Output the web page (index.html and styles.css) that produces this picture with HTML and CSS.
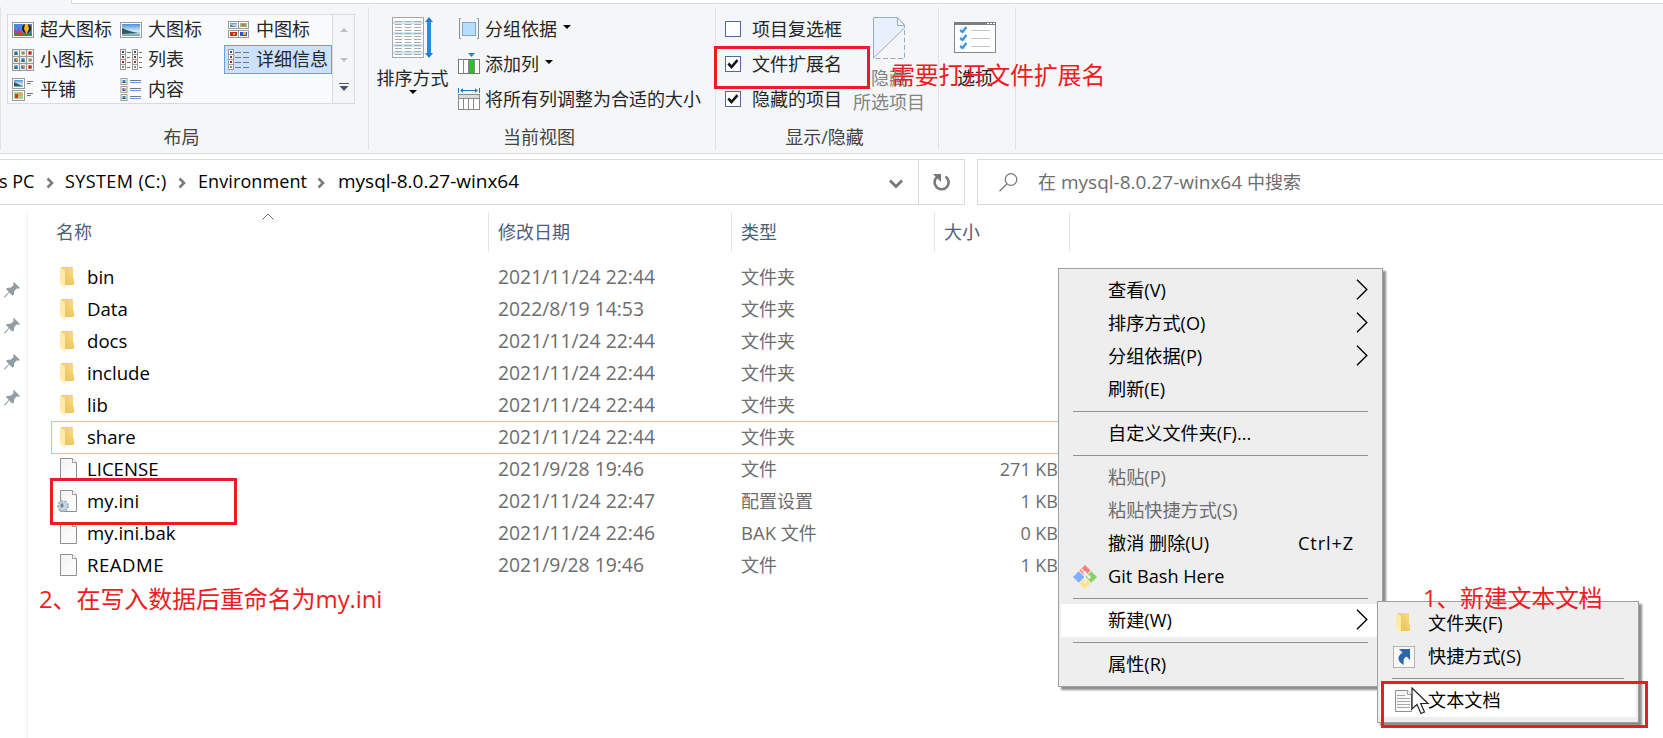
FILE: index.html
```html
<!DOCTYPE html>
<html lang="zh-CN">
<head>
<meta charset="utf-8">
<title>mysql-8.0.27-winx64</title>
<link rel="stylesheet" href="styles.css">
</head>
<body>
<svg class="defs" width="0" height="0">
  <defs>
    <linearGradient id="goldFront" x1="0" x2="0" y1="0" y2="1"><stop offset="0" stop-color="#ffe79c"/><stop offset="1" stop-color="#fff0b8"/></linearGradient>
    <linearGradient id="goldBack" x1="0" x2="1" y1="1" y2="0"><stop offset="0" stop-color="#e6bd55"/><stop offset="1" stop-color="#fbdc80"/></linearGradient>
    <linearGradient id="sky" x1="0" x2="0" y1="0" y2="1"><stop offset="0" stop-color="#4b8fdb"/><stop offset=".6" stop-color="#d6ecfa"/><stop offset="1" stop-color="#6a9dbd"/></linearGradient>
    <linearGradient id="paper" x1="0" x2="1" y1="0" y2="1"><stop offset="0" stop-color="#f1f2f3"/><stop offset="1" stop-color="#fff"/></linearGradient>
  </defs>
  <symbol id="folder" viewBox="0 0 15 21">
    <path d="M1 0H13V11L14 12V18H4V4Z" fill="url(#goldBack)"/>
    <path d="M0 .5 5 3V21L0 17Z" fill="url(#goldFront)"/>
  </symbol>
  <symbol id="file" viewBox="0 0 17 22">
    <path d="M.5.5H12.5L16.5 4.5V21.5H.5Z" fill="url(#paper)" stroke="#8d8f91"/>
    <path d="M12.5.5V4.5H16.5" fill="#fff" stroke="#9b9d9f"/>
  </symbol>
  <symbol id="pin" viewBox="0 0 16 16">
    <path d="M10 0 16 6 14.500 6.800 12.500 6.600 10 9.500 10 12.500 8.600 13.800 5.400 10.600 1 15.500 0 15 .4 14.300 4.900 10 2 7 3.500 5.800 6.500 5.800 9.500 3.200 9.200 1Z" fill="#929da3"/>
  </symbol>
  <symbol id="crumb" viewBox="0 0 8 12"><path d="M1.5 1.5 6 6 1.5 10.5" fill="none" stroke="#7b7b7b" stroke-width="2.6"/></symbol>
  <symbol id="drop" viewBox="0 0 8 4"><path d="M0 0H8L4 4Z" fill="#000"/></symbol>
  <symbol id="more" viewBox="0 0 12 21"><path d="M1 .8 10.8 10.5 1 20.2" fill="none" stroke="#000" stroke-width="1.4"/></symbol>
  <symbol id="tick" viewBox="0 0 16 16">
    <rect x=".5" y=".5" width="15" height="15" fill="#fff" stroke="#4f6a99"/>
    <path d="M3.3 7.5 6.5 11 12.5 4.2" fill="none" stroke="#161616" stroke-width="2.6"/>
  </symbol>
  <symbol id="tb1" viewBox="0 0 7 7"><rect x=".5" y=".5" width="6" height="6" fill="#fff" stroke="#9a9a9a"/><rect x="2" y="2" width="3" height="3" fill="#3f83b8"/><rect x="2" y="4" width="3" height="1" fill="#245a4c"/></symbol>
  <symbol id="tb2" viewBox="0 0 7 7"><rect x=".5" y=".5" width="6" height="6" fill="#fff" stroke="#9a9a9a"/><rect x="2" y="2" width="3" height="3" fill="#86b56a"/><rect x="3" y="3" width="2" height="1" fill="#d55b3d"/></symbol>
  <symbol id="tb3" viewBox="0 0 7 7"><rect x=".5" y=".5" width="6" height="6" fill="#fff" stroke="#9a9a9a"/><rect x="2" y="2" width="3" height="3" fill="#c52a15"/></symbol>
  <symbol id="tb4" viewBox="0 0 7 7"><rect x=".5" y=".5" width="6" height="6" fill="#fff" stroke="#9a9a9a"/><rect x="2" y="2" width="3" height="3" fill="#1d47b8"/><rect x="3" y="2" width="2" height="2" fill="#e8b51e"/></symbol>
</svg>

<div class="tabstrip"><div class="tabstrip-rest"></div></div>

<section class="ribbon">
  <div class="group group-layout">
    <div class="gallery">
      <div class="gallery-grid">
        <div class="view"><svg width="22" height="22" viewBox="0 0 22 22"><rect x=".5" y="3.5" width="21" height="15" fill="#fff" stroke="#9a9a9a"/><rect x="2" y="5" width="18" height="12" fill="#4a86dd"/><path d="M2 9 5 13 7 9 9 14V17H2Z" fill="#b93b9b"/><path d="M2 14H20V17H2Z" fill="#3f8a35"/><ellipse cx="14.500" cy="9.500" rx="4.500" ry="4.500" fill="#1c1c18"/><path d="M13 5H16L17 10 14.500 15 12 10Z" fill="#f2b81c"/><circle cx="9" cy="14.500" r="2" fill="#e5411f"/></svg><span>超大图标</span></div>
        <div class="view"><svg width="22" height="22" viewBox="0 0 22 22"><rect x=".5" y="3.5" width="21" height="15" fill="#fff" stroke="#9a9a9a"/><rect x="2" y="5" width="18" height="12" fill="url(#sky)"/><path d="M2 9Q8 12 18 14L2 15Z" fill="#2f5b56"/></svg><span>大图标</span></div>
        <div class="view"><svg width="22" height="22" viewBox="0 0 22 22"><g fill="#fff" stroke="#9a9a9a"><rect x=".5" y="2.500" width="10" height="7"/><rect x="10.500" y="2.500" width="10" height="7"/><rect x=".5" y="11.500" width="10" height="7"/><rect x="10.500" y="11.500" width="10" height="7"/></g><rect x="2" y="4" width="7" height="4" fill="url(#sky)"/><path d="M2 6 8 7.500H2Z" fill="#255c4f"/><rect x="12" y="4" width="7" height="4" fill="#8dbb70"/><rect x="14" y="5" width="3" height="2" fill="#e06842"/><rect x="2" y="13" width="7" height="4" fill="#cb2d13"/><rect x="5" y="14" width="2" height="2" fill="#f2b23c"/><rect x="12" y="13" width="7" height="4" fill="#2b57bf"/><rect x="15" y="13" width="3" height="3" fill="#e9b51d"/></svg><span>中图标</span></div>
        <div class="view"><svg width="22" height="22" viewBox="0 0 22 22"><use href="#tb1" x="0" y="0" width="8" height="8"/><use href="#tb2" x="7" y="0" width="8" height="8"/><use href="#tb3" x="14" y="0" width="8" height="8"/><use href="#tb4" x="0" y="7" width="8" height="8"/><use href="#tb1" x="7" y="7" width="8" height="8"/><use href="#tb2" x="14" y="7" width="8" height="8"/><use href="#tb1" x="0" y="14" width="8" height="8"/><use href="#tb4" x="7" y="14" width="8" height="8"/><use href="#tb3" x="14" y="14" width="8" height="8"/></svg><span>小图标</span></div>
        <div class="view"><svg width="22" height="22" viewBox="0 0 22 22"><g id="strip"><rect x=".5" y=".5" width="5" height="20" fill="#fff" stroke="#9a9a9a"/><path d="M1 5.500H5M1 10.500H5M1 15.500H5" stroke="#9a9a9a"/><rect x="2" y="2" width="2" height="2" fill="#1f5579"/><rect x="2" y="7" width="2" height="2" fill="#8a3b2c"/><rect x="2" y="12" width="2" height="2" fill="#c11f18"/><rect x="2" y="17" width="2" height="2" fill="#6da551"/></g><use href="#strip" x="12"/><path d="M7 3.500H11M7 8.500H10M7 13.500H11M7 18.500H10M19 3.500H22M19 8.500H22M19 13.500H22M19 18.500H22" stroke="#777"/></svg><span>列表</span></div>
        <div class="view selected"><svg width="22" height="22" viewBox="0 0 22 22"><use href="#strip"/><path d="M7 3.500H13M15 3.500H21M7 8.500H13M15 8.500H21M7 13.500H13M15 13.500H21M7 18.500H13M15 18.500H21" stroke="#777"/></svg><span>详细信息</span></div>
        <div class="view"><svg width="22" height="24" viewBox="0 0 22 24"><g fill="#fff" stroke="#9a9a9a"><rect x=".5" y=".5" width="12" height="10"/><rect x=".5" y="12.500" width="12" height="10"/></g><rect x="2" y="2" width="9" height="7" fill="url(#sky)"/><path d="M2 4 10 8H2Z" fill="#255c4f"/><rect x="2" y="14" width="9" height="7" fill="#a8d08a"/><path d="M3 16H6V20H3Z" fill="#c33b2e"/><rect x="6" y="15" width="4" height="3" fill="#eea24a"/><path d="M15 3.500H21M15 5.500H19M15 15.500H21M15 17.500H19" stroke="#777"/></svg><span>平铺</span></div>
        <div class="view"><svg width="22" height="24" viewBox="0 0 22 24"><use href="#tb1" x="0" y="0" width="8" height="7"/><use href="#tb4" x="0" y="8" width="8" height="7"/><use href="#tb1" x="0" y="16" width="8" height="7"/><path d="M10 2.500H21M10 10.500H21M10 18.500H21" stroke="#777"/><path d="M10 4.500H21M10 12.500H21M10 20.500H21" stroke="#5b9bea"/></svg><span>内容</span></div>
      </div>
      <div class="gallery-scroll">
        <div><svg width="8" height="4"><path d="M0 4H8L4 0Z" fill="#b9bfc6"/></svg></div>
        <div><svg width="8" height="4"><path d="M0 0H8L4 4Z" fill="#b9bfc6"/></svg></div>
        <div><svg width="10" height="8"><path d="M0 .5H10" stroke="#44546a"/><path d="M.5 3H9.500L5 8Z" fill="#44546a"/></svg></div>
      </div>
    </div>
    <div class="group-name name-layout">布局</div>
  </div>

  <div class="group group-view">
    <div class="view-body">
      <div class="big-button">
        <svg width="42" height="42" viewBox="0 0 42 42"><rect x=".5" y=".5" width="31" height="40" fill="#fcfcfc" stroke="#a5a7a8"/><path d="M1 5.500H31M1 16.500H31M1 28.500H31M1 36H31" stroke="#cfe7f2" stroke-width="3"/><g stroke="#aaa" stroke-dasharray="7 2.500"><path d="M3 4.500H29M3 7.500H29M3 10.500H29M3 13.500H29M3 16.500H29M3 19.500H29M3 22.500H29M3 25.500H29M3 28.500H29M3 31.500H29M3 34.500H29M3 37.500H29"/></g><path d="M37 4V37" stroke="#2e8ad8" stroke-width="4"/><path d="M33 5 37 0 41 5ZM33 36 37 41 41 36Z" fill="#247dc8"/></svg>
        <span>排序方式</span>
        <svg width="8" height="4"><use href="#drop"/></svg>
      </div>
      <div class="small-buttons">
        <div class="small-button"><svg width="22" height="22" viewBox="0 0 22 22"><path d="M3 .5H1.500V20.500H3M19 .5H20.500V20.500H19" fill="none" stroke="#8d8f91"/><rect x="4.500" y="4.500" width="13" height="13" fill="#b5dffd" stroke="#79a8d6"/></svg><span>分组依据</span><svg width="8" height="4"><use href="#drop"/></svg></div>
        <div class="small-button"><svg width="22" height="22" viewBox="0 0 22 22"><path d="M10 0H17L13.500 4Z" fill="#2f7fc4"/><rect x=".5" y="6.500" width="21" height="14" fill="#fff" stroke="#777"/><path d="M5.500 6V20M10.500 6V20M16.500 6V20" stroke="#888"/><rect x="11" y="7" width="5" height="13" fill="#22c522"/></svg><span>添加列</span><svg width="8" height="4"><use href="#drop"/></svg></div>
        <div class="small-button"><svg width="22" height="22" viewBox="0 0 22 22"><path d="M.5 0V5M21.500 0V5M3 2.500H19" stroke="#2b75b5"/><path d="M2 2.500 5 .3V4.700ZM20 2.500 17 .3V4.700Z" fill="#2b75b5"/><rect x=".5" y="6.500" width="21" height="15" fill="#fff" stroke="#8a8a8a"/><path d="M1 8.500H21" stroke="#dcdcdc" stroke-width="3"/><path d="M1 10.500H21M5.500 11V21M10.500 11V21M15.500 11V21" stroke="#8a8a8a"/></svg><span>将所有列调整为合适的大小</span></div>
      </div>
    </div>
    <div class="group-name name-view">当前视图</div>
  </div>

  <div class="group group-show">
    <div class="show-body">
      <div class="checks">
        <label class="check"><svg width="16" height="16"><rect x=".5" y=".5" width="15" height="15" fill="#fff" stroke="#4f6a99"/></svg><span>项目复选框</span></label>
        <label class="check"><svg width="16" height="16"><use href="#tick"/></svg><span>文件扩展名</span></label>
        <label class="check"><svg width="16" height="16"><use href="#tick"/></svg><span>隐藏的项目</span></label>
      </div>
      <div class="hide-button">
        <svg width="32" height="42" viewBox="0 0 32 42"><path d="M.5 41V.5H24L31.500 8V11Z" fill="#e7f0fb" stroke="#9aabc5"/><path d="M24.500.5V8.500H31.500Z" fill="#f5f9ff" stroke="#9aabc5"/><path d="M31.500 13V41.500H2" fill="none" stroke="#9aabc5" stroke-dasharray="5 2.500"/></svg>
        <span>隐藏</span><span>所选项目</span>
      </div>
    </div>
    <div class="group-name name-show"><span>显示/隐藏</span></div>
  </div>

  <div class="group group-options">
    <svg width="42" height="32" viewBox="0 0 42 32"><rect x=".5" y="1" width="41" height="29.500" fill="#fff" stroke="#838688"/><rect width="42" height="3" fill="#7b7e82"/><path d="M33 1.500H35M36 1.500H38M39 1.500H41" stroke="#fff"/><path d="M17 8.500H36M17 16.500H36M17 24.500H36" stroke="#c3c5c7"/><g fill="#e7eef5"><rect x="6" y="5" width="6" height="6"/><rect x="6" y="13" width="6" height="6"/><rect x="6" y="21" width="6" height="6"/></g><path d="M6 8 8.500 10 12.500 5M6 16 8.500 18 12.500 13M6 24 8.500 26 12.500 21" fill="none" stroke="#3795dd" stroke-width="2.200"/></svg>
    <span>选项</span>
  </div>
</section>

<div class="navbar">
  <div class="address">
    <div class="crumbs">
      <span class="c0">s PC</span><svg width="8" height="12"><use href="#crumb"/></svg>
      <span class="c1">SYSTEM (C:)</span><svg width="8" height="12"><use href="#crumb"/></svg>
      <span class="c2">Environment</span><svg width="8" height="12"><use href="#crumb"/></svg>
      <span class="c3">mysql-8.0.27-winx64</span>
    </div>
    <svg class="history" width="14" height="10" viewBox="0 0 14 10"><path d="M1 1.500 7 7.500 13 1.500" fill="none" stroke="#777" stroke-width="2.800"/></svg>
    <div class="refresh"><svg width="17" height="18" viewBox="0 0 17 18"><path d="M12.500 3.500A7 7 0 1 1 4 4" fill="none" stroke="#777" stroke-width="2.600"/><path d="M0 1H8V9L5.500 6.500Z" fill="#777"/></svg></div>
  </div>
  <div class="search">
    <svg width="19" height="19" viewBox="0 0 19 19"><circle cx="12" cy="6.500" r="5.800" fill="none" stroke="#777" stroke-width="1.200"/><path d="M8 10.800.5 18.300" stroke="#777" stroke-width="1.300"/></svg>
    <span>在</span><span class="search-name">mysql-8.0.27-winx64</span><span>中搜索</span>
  </div>
</div>

<main class="content">
  <aside class="pins">
    <svg width="16" height="16"><use href="#pin"/></svg>
    <svg width="16" height="16"><use href="#pin"/></svg>
    <svg width="16" height="16"><use href="#pin"/></svg>
    <svg width="16" height="16"><use href="#pin"/></svg>
  </aside>
  <div class="files">
    <div class="head">
      <div class="h-name">名称<svg class="sorted" width="12" height="7"><path d="M.5 6.500 6 1 11.500 6.500" fill="none" stroke="#666"/></svg></div>
      <div class="h-date">修改日期</div><div class="h-type">类型</div><div class="h-size">大小</div>
    </div>
    <div class="row"><div class="icon"><svg width="15" height="21"><use href="#folder"/></svg></div><div class="name">bin</div><div class="date">2021/11/24 22:44</div><div class="type">文件夹</div><div class="size"></div></div>
    <div class="row"><div class="icon"><svg width="15" height="21"><use href="#folder"/></svg></div><div class="name">Data</div><div class="date">2022/8/19 14:53</div><div class="type">文件夹</div><div class="size"></div></div>
    <div class="row"><div class="icon"><svg width="15" height="21"><use href="#folder"/></svg></div><div class="name">docs</div><div class="date">2021/11/24 22:44</div><div class="type">文件夹</div><div class="size"></div></div>
    <div class="row"><div class="icon"><svg width="15" height="21"><use href="#folder"/></svg></div><div class="name">include</div><div class="date">2021/11/24 22:44</div><div class="type">文件夹</div><div class="size"></div></div>
    <div class="row"><div class="icon"><svg width="15" height="21"><use href="#folder"/></svg></div><div class="name">lib</div><div class="date">2021/11/24 22:44</div><div class="type">文件夹</div><div class="size"></div></div>
    <div class="row focused"><div class="icon"><svg width="15" height="21"><use href="#folder"/></svg></div><div class="name">share</div><div class="date">2021/11/24 22:44</div><div class="type">文件夹</div><div class="size"></div></div>
    <div class="row"><div class="icon"><svg width="17" height="22"><use href="#file"/></svg></div><div class="name">LICENSE</div><div class="date">2021/9/28 19:46</div><div class="type">文件</div><div class="size">271 KB</div></div>
    <div class="row"><div class="icon icon-ini"><svg width="20" height="23" viewBox="0 0 20 23"><use href="#file" x="3" y="0" width="17" height="22"/><circle cx="6" cy="16" r="5" fill="#c3d1dc" stroke="#9fb2c2" stroke-width="2" stroke-dasharray="2 1.500"/><circle cx="6" cy="16" r="3.800" fill="#c9d6e0"/><ellipse cx="5" cy="15.500" rx="1.500" ry="2.300" fill="#6d8191"/></svg></div><div class="name">my.ini</div><div class="date">2021/11/24 22:47</div><div class="type">配置设置</div><div class="size">1 KB</div></div>
    <div class="row"><div class="icon"><svg width="17" height="22"><use href="#file"/></svg></div><div class="name">my.ini.bak</div><div class="date">2021/11/24 22:46</div><div class="type"><span class="latin">BAK</span> 文件</div><div class="size">0 KB</div></div>
    <div class="row"><div class="icon"><svg width="17" height="22"><use href="#file"/></svg></div><div class="name caps">README</div><div class="date">2021/9/28 19:46</div><div class="type">文件</div><div class="size">1 KB</div></div>
  </div>
</main>

<div class="menu context">
  <div class="item">查看(V)<svg class="sub" width="12" height="21"><use href="#more"/></svg></div>
  <div class="item">排序方式(O)<svg class="sub" width="12" height="21"><use href="#more"/></svg></div>
  <div class="item">分组依据(P)<svg class="sub" width="12" height="21"><use href="#more"/></svg></div>
  <div class="item">刷新(E)</div>
  <hr>
  <div class="item">自定义文件夹(F)...</div>
  <hr>
  <div class="item disabled">粘贴(P)</div>
  <div class="item disabled">粘贴快捷方式(S)</div>
  <div class="item">撤消 删除(U)<span class="key">Ctrl+Z</span></div>
  <div class="item"><svg class="item-icon" width="24" height="24" viewBox="0 0 24 24"><path d="M12 0 17.500 5.500 12 11 6.500 5.500Z" fill="#ff7f7c"/><path d="M5.800 6.200 11.500 12 5.800 17.800 0 12Z" fill="#7fb0ff"/><path d="M18.200 6.200 24 12 18.200 17.800 12.500 12Z" fill="#86d45f"/><path d="M12 13 17.500 18.500 12 24 6.500 18.500Z" fill="#ffe485"/><path d="M8.500 4 12 8V17M12 8 16 12" fill="none" stroke="#eee" stroke-width="1.500"/><circle cx="12" cy="8" r="1.700" fill="#eee"/><circle cx="12" cy="17" r="1.700" fill="#eee"/><circle cx="16" cy="12" r="1.700" fill="#eee"/></svg><span class="git">Git Bash Here</span></div>
  <hr>
  <div class="item hot">新建(W)<svg class="sub" width="12" height="21"><use href="#more"/></svg></div>
  <hr>
  <div class="item">属性(R)</div>
</div>

<div class="menu submenu">
  <div class="item"><svg class="item-icon fold" width="15" height="21"><use href="#folder"/></svg>文件夹(F)</div>
  <div class="item"><svg class="item-icon" width="22" height="22" viewBox="0 0 22 22"><rect x=".5" y=".5" width="21" height="21" fill="#f8f8f8" stroke="#b4b4b4"/><path d="M6 3H17V14L13.500 10.500C10.500 12 10 15 11 19 5 16 3 11 9.500 6.500Z" fill="#2f64a8"/></svg>快捷方式(S)</div>
  <hr>
  <div class="item hot"><svg class="item-icon doc" width="17" height="22" viewBox="0 0 17 22"><use href="#file" width="17" height="22"/><path d="M2 5.500H10M2 8.500H15M2 11.500H15M2 14.500H15M2 17.500H15" stroke="#a5a7a9"/></svg>文本文档</div>
</div>

<div class="mark box-ext"></div>
<div class="mark box-ini"></div>
<div class="mark box-new"></div>
<div class="note note-ext">需要打开文件扩展名</div>
<div class="note note-ini">2、在写入数据后重命名为<span class="note-file">my.ini</span></div>
<div class="note note-new">1、新建文本文档</div>
<svg class="pointer" width="19" height="28" viewBox="0 0 19 28"><path d="M1 1V22L6 17.500 10 26.500 13.500 25 9.700 16.500H17Z" fill="#fff" stroke="#222" stroke-width="1.200"/></svg>
</body>
</html>
```
FILE: styles.css
```css
* { box-sizing: border-box; }
body {
  position: relative;
  margin: 0;
  width: 1663px;
  height: 738px;
  overflow: hidden;
  background: #fff;
  color: #000;
  font-family: "Open Sans", "Noto Sans CJK SC", sans-serif;
  font-size: 18px;
  line-height: 24px;
  white-space: nowrap;
}
svg { display: block; flex: none; }
.defs { position: absolute; }

/* Ribbon */
.tabstrip { height: 4px; padding-left: 71px; background: #f5f6f7; }
.tabstrip-rest { height: 4px; background: #fff; border-left: 1px solid #dadbdc; border-bottom: 1px solid #dadbdc; }
.ribbon {
  display: flex;
  height: 150px;
  padding: 3px 0;
  background: #f5f6f7;
  border-bottom: 1px solid #dadbdc;
  color: #262626;
}
.group { position: relative; display: flex; flex-direction: column; border-right: 1px solid #e2e3e4; }
.group-layout { width: 369px; padding: 7px 0 0 6px; border-left: 1px solid #e2e3e4; }
.group-view { width: 347px; padding: 10px 0 0 7px; }
.group-show { width: 223px; padding: 10px 0 0 9px; }
.group-options { width: 77px; padding: 15px 4px 0 0; align-items: center; gap: 12px; }
.group-name { margin-top: auto; padding-bottom: 1px; color: #444; text-align: center; }
.name-layout { width: 349px; }
.name-view { width: 326px; }
.name-show { width: 199px; }

.gallery { display: flex; width: 348px; height: 90px; }
.gallery-grid {
  display: grid;
  grid-template-columns: repeat(3, 108px);
  grid-template-rows: 30px 30px 29px;
  width: 326px;
  background: #fafbfd;
  border: 1px solid #dadbdc;
}
.view { display: flex; align-items: center; gap: 6px; width: 108px; height: 29px; padding: 0 0 0 4px; }
.view span { margin-top: -1px; }
.view.selected { padding-left: 3px; background: #cce1fc; border: 1px solid #62a2e4; }
.gallery-scroll { display: grid; grid-template-rows: 30px 29px 29px; width: 22px; border: 1px solid #dadbdc; border-left: 0; }
.gallery-scroll div { display: flex; align-items: center; justify-content: center; }
.gallery-scroll div + div + div { padding-bottom: 4px; }

.view-body { display: flex; gap: 9px; }
.big-button { display: flex; flex-direction: column; align-items: center; width: 73px; }
.big-button > span { margin-top: 7px; line-height: 24px; }
.small-buttons { display: flex; flex-direction: column; gap: 11px; }
.small-button { display: flex; align-items: center; gap: 5px; height: 24px; }
.small-button span + svg { margin: -5px 0 0 1px; }

.show-body { display: flex; height: 100px; }
.checks { display: flex; flex-direction: column; gap: 11px; width: 127px; }
.check { display: flex; align-items: center; gap: 11px; height: 24px; }
.hide-button { display: flex; flex-direction: column; align-items: center; width: 74px; color: #838383; }
.hide-button svg { margin-bottom: 7px; }

/* Address bar */
.navbar { display: flex; gap: 12px; height: 51px; padding-top: 5px; }
.address { display: flex; width: 965px; height: 46px; border: 1px solid #d9d9d9; border-left: 0; }
.crumbs { display: flex; align-items: center; flex: 1; padding-bottom: 2px; }
.crumbs svg { margin-top: 4px; }
.c0 { width: 46px; text-indent: -1px; }
.c1 { width: 113px; margin-left: 11px; letter-spacing: .4px; }
.c2 { width: 119px; margin-left: 12px; letter-spacing: .1px; }
.c3 { margin-left: 13px; font-size: 19px; }
.history { margin: 19px 15px 0 0; }
.refresh { display: flex; align-items: center; justify-content: center; width: 46px; border-left: 1px solid #d9d9d9; }
.search { display: flex; align-items: center; flex: 1; height: 46px; padding-left: 21px; border: 1px solid #d9d9d9; border-right: 0; color: #6d6d6d; }
.search > svg { margin-right: 20px; }
.search-name { margin: 0 6px 0 5px; width: 180px; font-size: 19px; }

/* File list */
.content { display: flex; height: 533px; }
.pins { display: flex; flex-direction: column; gap: 20px; width: 28px; height: 527px; margin-top: 7px; padding: 70px 0 0 4px; border-right: 1px solid #f0f0f0; }
.files { width: 1042px; margin-left: 23px; }
.head { display: grid; grid-template-columns: 438px 243px 203px 135px; height: 56px; padding-top: 7px; color: #4c607a; }
.head div { position: relative; height: 40px; padding-left: 9px; border-right: 1px solid #e5e5e5; line-height: 41px; }
.head .h-name { padding-left: 5px; }
.sorted { position: absolute; left: 211px; top: 1px; }
.row {
  display: grid;
  grid-template-columns: 35px 411px 243px 203px 115px;
  align-items: center;
  height: 32px;
  color: #6d6d6d;
}
.row.focused { height: 33px; margin-bottom: -1px; padding-bottom: 1px; box-shadow: inset 0 0 0 1px #99d1ff; }
.icon { padding-left: 9px; }
.icon-ini { padding-left: 6px; }
.row .name { padding-left: 1px; color: #000; font-size: 18.600px; }
.row .name.caps { letter-spacing: .5px; }
.row .date { padding-left: 1px; font-size: 19.350px; }
.row .type { padding-left: 1px; }
.row .latin { font-size: 18.500px; }
.row .size { text-align: right; }

/* Menus */
.menu { position: absolute; background: #eee; border: 1px solid #a0a0a0; padding: 5px 2px; box-shadow: 3px 3px 2px rgba(0, 0, 0, .45); }
.context { left: 1058px; top: 268px; width: 325px; height: 419px; }
.submenu { left: 1377px; top: 601px; width: 262px; height: 122px; }
.item { position: relative; display: flex; align-items: center; height: 33px; padding: 0 0 2px 47px; font-size: 18.150px; }
.submenu .item { padding-left: 48px; }
.item.hot { background: #fff; }
.item.disabled { color: #6d6d6d; }
.menu hr { height: 1px; margin: 5px 12px 5px; border: 0; background: #919191; }
.sub { position: absolute; right: 12px; top: 5px; }
.key { position: absolute; right: 26px; letter-spacing: .9px; }
.item-icon { position: absolute; left: 12px; margin-top: 2px; }
.submenu .item-icon { left: 13px; }
.submenu .fold { left: 16px; }
.submenu .doc { left: 15px; }

/* Annotations */
.mark { position: absolute; border: 3px solid #ed1c24; }
.box-ext { left: 714px; top: 46px; width: 156px; height: 43px; }
.box-ini { left: 50px; top: 478px; width: 187px; height: 47px; }
.box-new { left: 1381px; top: 681px; width: 267px; height: 47px; }
.note { position: absolute; color: #ed1c24; font-size: 24px; line-height: 32px; }
.note-ext { left: 891px; top: 59px; letter-spacing: -.2px; }
.note-ini { left: 39px; top: 583px; letter-spacing: -.1px; }
.note-new { left: 1423px; top: 582px; letter-spacing: -.3px; }
.pointer { position: absolute; left: 1411px; top: 687px; }
```
